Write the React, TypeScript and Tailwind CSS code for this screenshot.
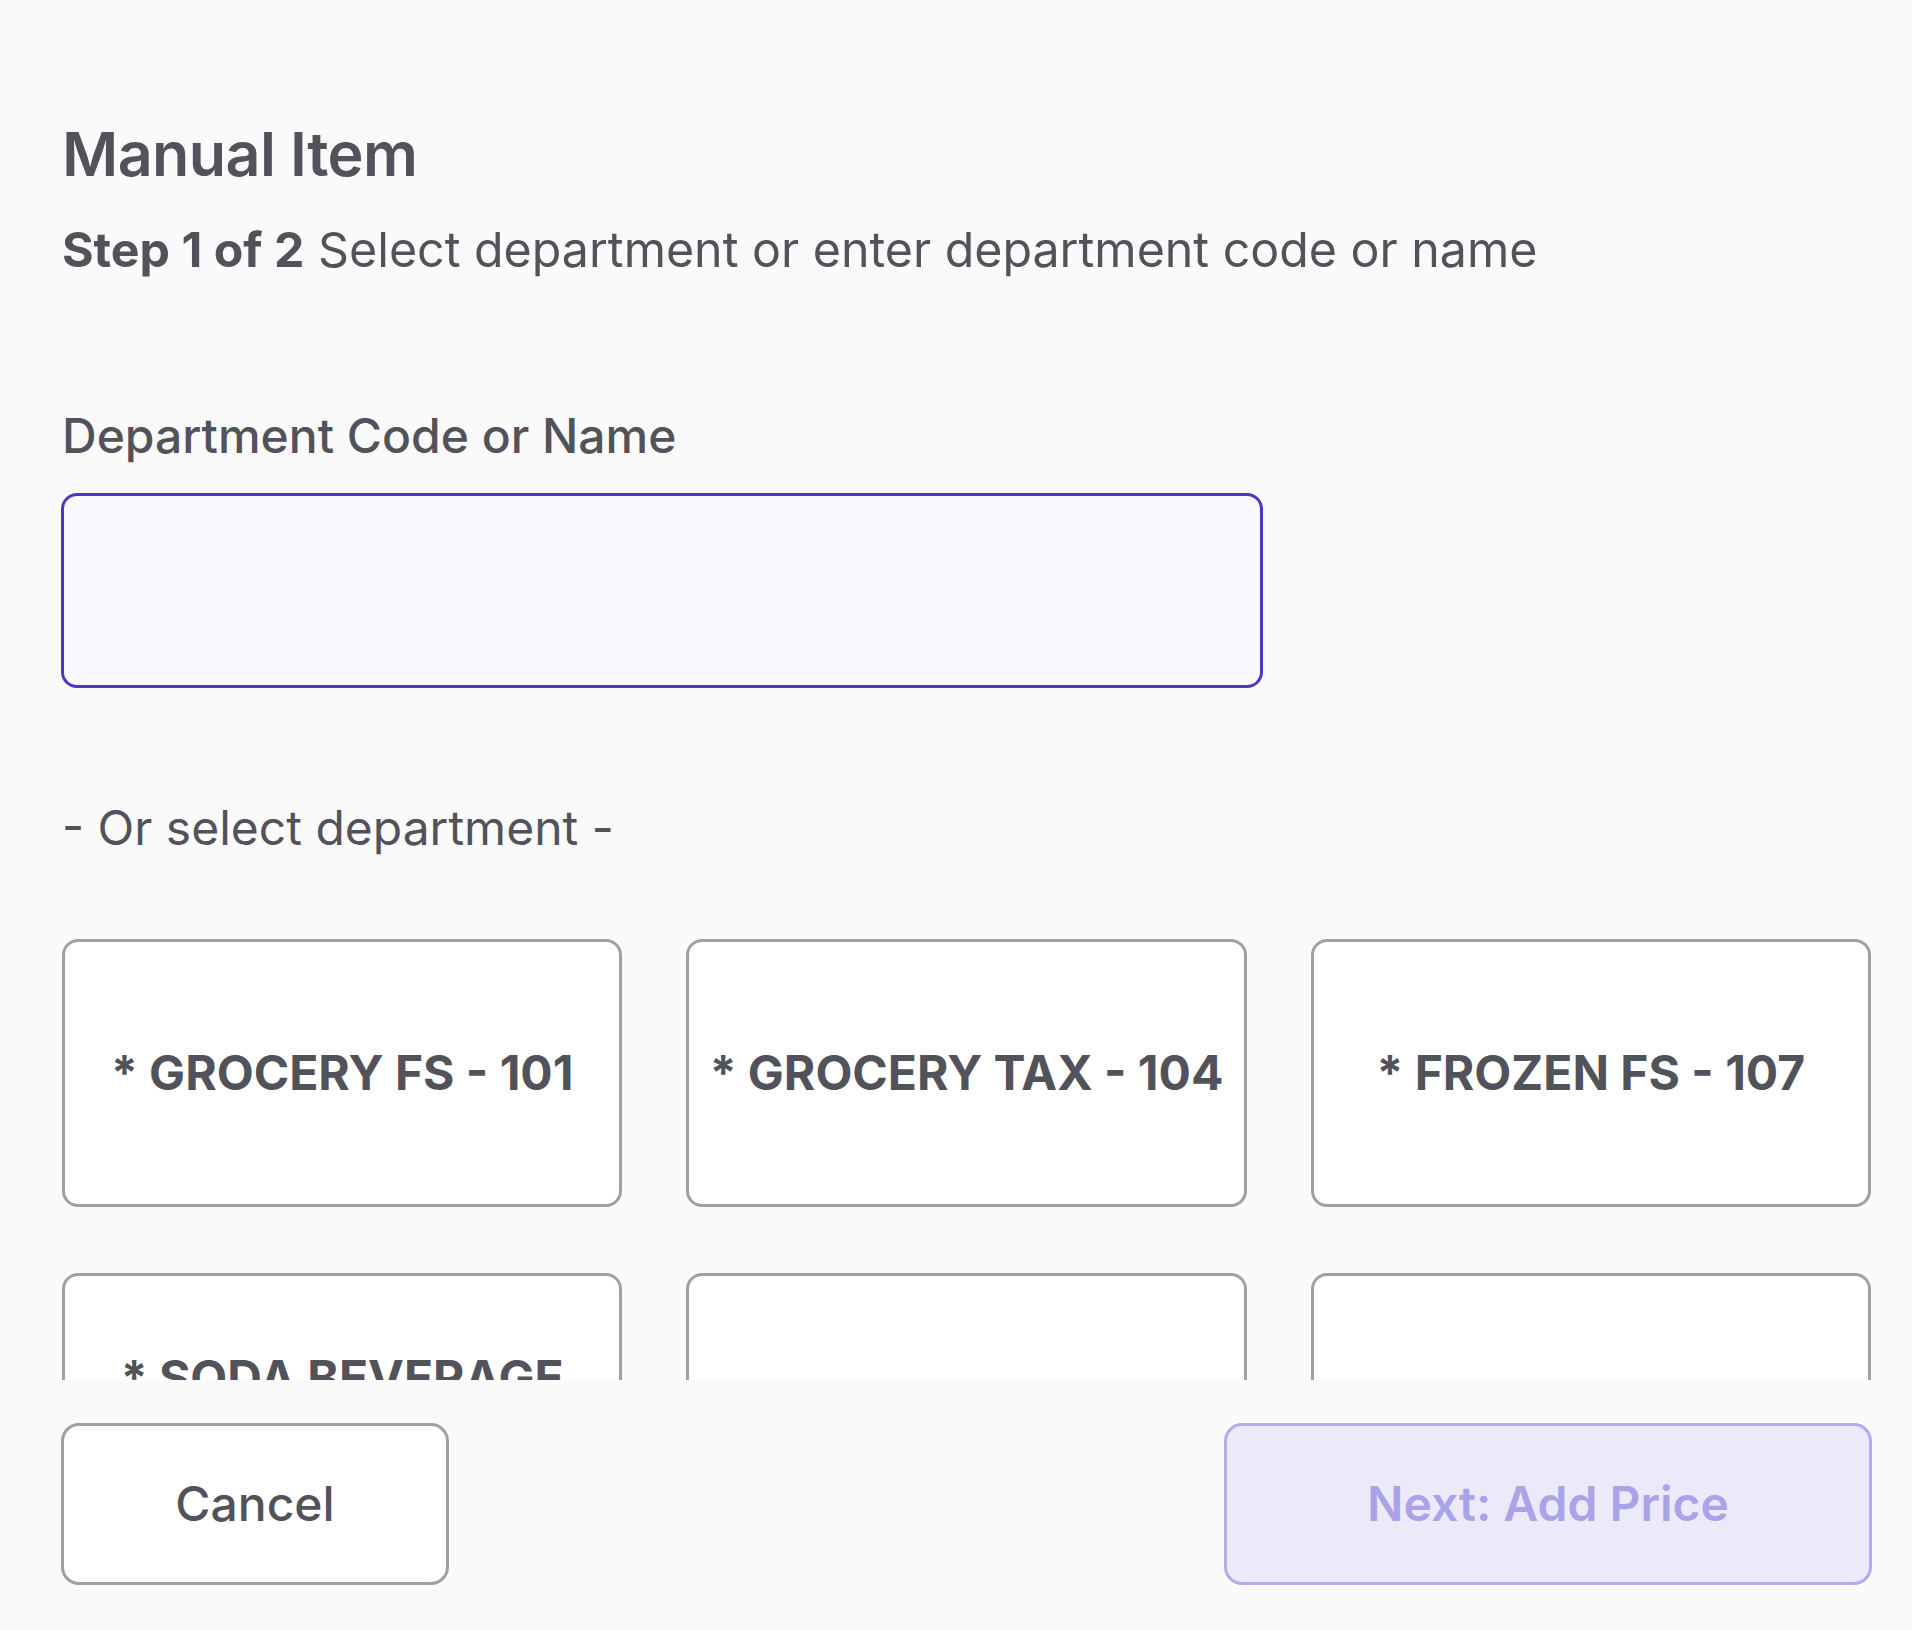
import React, { useState } from "react";

const departments = [
  "* GROCERY FS - 101",
  "* GROCERY TAX - 104",
  "* FROZEN FS - 107",
  "* SODA BEVERAGE TAX - 110",
  "* DAIRY FS - 113",
  "* MEAT FS - 116",
  "* PRODUCE FS - 119",
  "* DELI FS - 122",
  "* BAKERY FS - 125",
];

export default function App() {
  const [query, setQuery] = useState("");
  const [selected, setSelected] = useState<string | null>(null);

  return (
    <main className="h-screen flex flex-col bg-[#fafafa] text-[#52525b] font-['Inter','Noto_Sans',sans-serif] overflow-hidden">
      <div className="flex-1 min-h-0 overflow-hidden pl-[62px] pr-[41px] pt-[118px]">
        <h1 className="text-[61px] leading-[1.2] font-semibold tracking-[-0.01em]">Manual Item</h1>
        <p className="mt-[23px] text-[48.3px] leading-[1.5]">
          <span className="font-bold">Step 1 of 2</span> Select department or enter department code or name
        </p>

        <label htmlFor="dept" className="block mt-[113px] text-[48px] leading-[1.5] font-medium">
          Department Code or Name
        </label>
        <input
          id="dept"
          value={query}
          onChange={(e) => setQuery(e.target.value)}
          className="mt-[21px] -ml-[1px] block w-[1202px] h-[195px] rounded-[16px] border-[3px] border-[#4739c6] bg-[#f8f8fe] px-8 text-[48px] outline-none"
        />

        <p className="mt-[104px] text-[48px] leading-[1.5]">- Or select department -</p>

        <div className="mt-[75px] grid grid-cols-3 gap-x-[64px] gap-y-[66px]">
          {departments.map((d) => (
            <button
              key={d}
              onClick={() => setSelected(d)}
              className={
                "h-[268px] rounded-[16px] border-[3px] bg-white px-4 flex items-center justify-center text-center text-[48px] leading-[1.2] font-bold " +
                (selected === d ? "border-[#4739c6]" : "border-[#9f9fa8]")
              }
            >
              {d}
            </button>
          ))}
        </div>
      </div>

      <footer className="h-[250px] shrink-0 flex items-start justify-between pt-[43px] pl-[61px] pr-[40px]">
        <button className="w-[388px] h-[162px] rounded-[18px] border-[3px] border-[#9f9fa8] bg-white text-[48px] font-medium">
          Cancel
        </button>
        <button
          disabled={!selected && !query}
          className="w-[648px] h-[162px] rounded-[18px] border-[3px] border-[#b3abea] bg-[#eceafa] text-[48px] font-semibold text-[#aba3e8]"
        >
          Next: Add Price
        </button>
      </footer>
    </main>
  );
}
